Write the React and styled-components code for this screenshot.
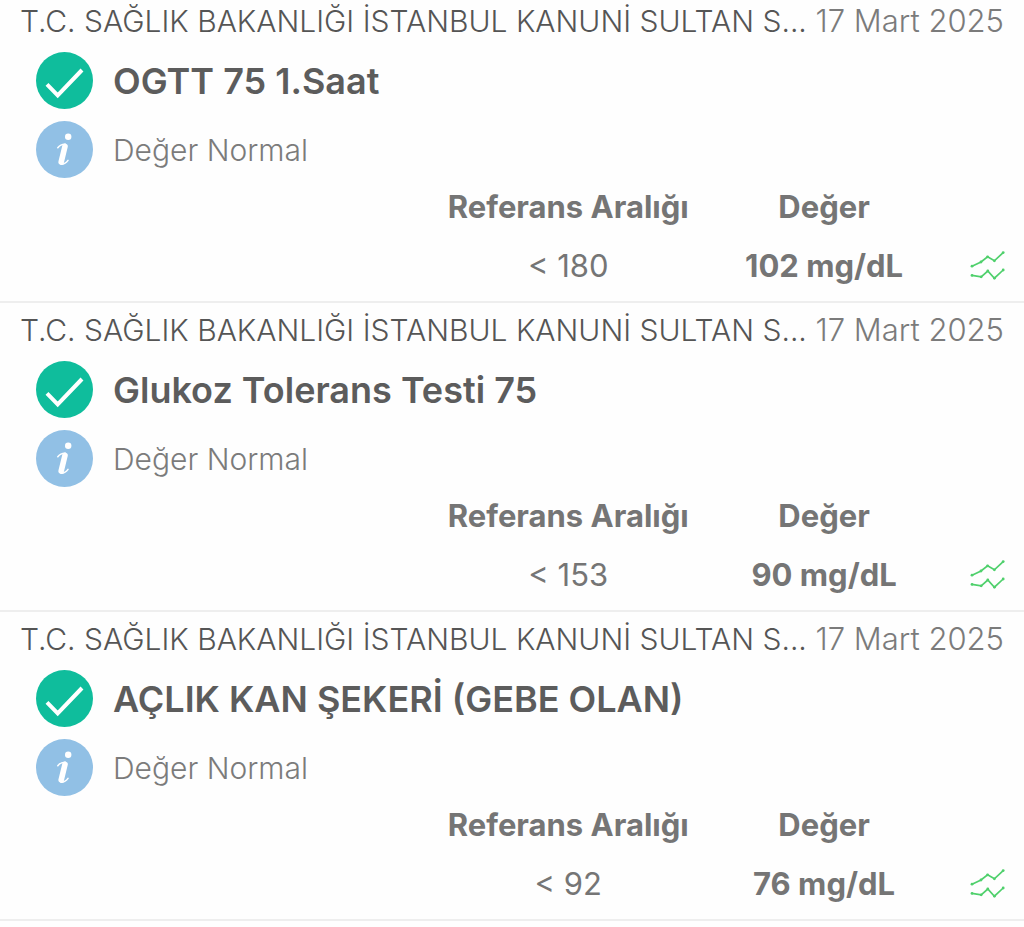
import React from "react";
import styled, { createGlobalStyle } from "styled-components";

const GlobalStyle = createGlobalStyle`
  * { box-sizing: border-box; }
  body {
    margin: 0;
    background: #fefefe;
    color: #757575;
    font-family: Inter, "Liberation Sans", sans-serif;
    font-size: 31px;
    line-height: 36px;
  }
`;

const ResultList = styled.main`
  display: flex;
  flex-direction: column;
`;

const ResultCard = styled.article`
  padding: 9px 0 17px;
  border-bottom: 2px solid #eeeeee;

  &:first-child {
    padding-top: 3px;
  }
`;

const CardHeader = styled.header`
  display: flex;
  align-items: baseline;
  justify-content: space-between;
  gap: 8px;
  height: 36px;
  padding: 0 20px;
  font-weight: 300;
  white-space: nowrap;
`;

const Hospital = styled.span`
  min-width: 0;
  overflow: hidden;
  text-overflow: ellipsis;
  color: #555555;
  font-size: 30px;
`;

const VisitDate = styled.time`
  flex: none;
  color: #7b7b7b;
`;

const StatusRows = styled.div`
  display: flex;
  flex-direction: column;
  gap: 12px;
  padding: 13px 20px 11px 36px;
`;

const StatusRow = styled.div`
  display: flex;
  align-items: center;
  gap: 20px;

  svg {
    flex: none;
  }
`;

const TestName = styled.h2`
  margin: 0;
  color: #5c5c5c;
  font-size: 36px;
  font-weight: 600;
  line-height: 40px;
`;

const StatusText = styled.p`
  margin: 0;
  color: #7b7b7b;
  font-size: 30px;
  font-weight: 300;
`;

const ValueTable = styled.table`
  width: 57%;
  margin-left: auto;
  table-layout: fixed;
  border-collapse: collapse;
  text-align: center;
  white-space: nowrap;

  th,
  td {
    padding: 0;
  }

  th {
    padding-bottom: 23px;
    font-weight: 700;
  }
`;

const TrendColumn = styled.col`
  width: 72px;
`;

const Measured = styled.td`
  font-weight: 700;
`;

const TrendButton = styled.button`
  display: block;
  width: 36px;
  height: 36px;
  margin: 0 auto;
  padding: 0;
  border: 0;
  background: none;
  cursor: pointer;

  svg {
    display: block;
  }
`;

function CheckIcon() {
  return (
    <svg width="57" height="57" viewBox="0 0 57 57" aria-hidden="true">
      <circle cx="28.5" cy="28.5" r="28.5" fill="#0fbd9c" />
      <path d="M11 32.3 21.7 43.3 46 18" fill="none" stroke="#fff" strokeWidth="4" />
    </svg>
  );
}

function InfoIcon() {
  return (
    <svg width="57" height="57" viewBox="0 0 57 57" aria-hidden="true">
      <circle cx="28.5" cy="28.5" r="28.5" fill="#91c0e5" />
      <circle cx="32.2" cy="15.8" r="3.2" fill="#fff" />
      <path d="M29 25.4 25.2 41" fill="none" stroke="#fff" strokeWidth="5.6" strokeLinecap="round" />
      <path
        d="M21.8 26.8Q24.5 23 29.5 23.2M25 43.2Q29.3 43.4 32 39.4"
        fill="none"
        stroke="#fff"
        strokeWidth="1.5"
        strokeLinecap="round"
      />
    </svg>
  );
}

function TrendIcon() {
  const upper = [[3, 18.2], [12, 14], [18.6, 8.8], [25.4, 12.8], [34.2, 4.6]];
  const lower = [[3, 27.4], [12.2, 28.8], [18.8, 23], [25.4, 30.2], [34.2, 22]];
  return (
    <svg width="36" height="36" viewBox="1 0 36 36" aria-hidden="true">
      {[upper, lower].map((points, line) => (
        <g key={line} fill="#4fd06c">
          <polyline points={points.join(" ")} fill="none" stroke="#4fd06c" strokeWidth="1.7" />
          {points.map(([x, y]) => (
            <circle key={x} cx={x} cy={y} r="1.4" />
          ))}
        </g>
      ))}
    </svg>
  );
}

const results = [
  { name: "OGTT 75 1.Saat", range: "< 180", value: "102 mg/dL" },
  { name: "Glukoz Tolerans Testi 75", range: "< 153", value: "90 mg/dL" },
  { name: "AÇLIK KAN ŞEKERİ (GEBE OLAN)", range: "< 92", value: "76 mg/dL" },
];

function Result({ name, range, value }) {
  return (
    <ResultCard>
      <CardHeader>
        <Hospital>T.C. SAĞLIK BAKANLIĞI İSTANBUL KANUNİ SULTAN S...</Hospital>
        <VisitDate dateTime="2025-03-17">17 Mart 2025</VisitDate>
      </CardHeader>
      <StatusRows>
        <StatusRow>
          <CheckIcon />
          <TestName>{name}</TestName>
        </StatusRow>
        <StatusRow>
          <InfoIcon />
          <StatusText>Değer Normal</StatusText>
        </StatusRow>
      </StatusRows>
      <ValueTable>
        <colgroup>
          <col />
          <col />
          <TrendColumn />
        </colgroup>
        <thead>
          <tr>
            <th scope="col">Referans Aralığı</th>
            <th scope="col">Değer</th>
            <td />
          </tr>
        </thead>
        <tbody>
          <tr>
            <td>{range}</td>
            <Measured>{value}</Measured>
            <td>
              <TrendButton type="button" aria-label={name}>
                <TrendIcon />
              </TrendButton>
            </td>
          </tr>
        </tbody>
      </ValueTable>
    </ResultCard>
  );
}

export default function App() {
  return (
    <>
      <GlobalStyle />
      <ResultList lang="tr">
        {results.map((result) => (
          <Result key={result.name} {...result} />
        ))}
      </ResultList>
    </>
  );
}
